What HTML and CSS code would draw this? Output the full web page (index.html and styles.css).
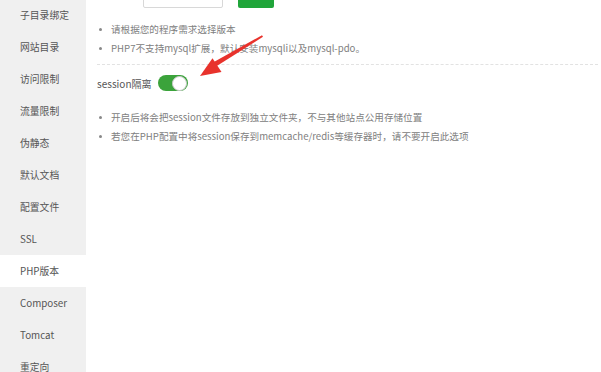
FILE: index.html
```html
<!DOCTYPE html>
<html>
<head>
<meta charset="utf-8">
<link rel="stylesheet" href="styles.css">
</head>
<body>
<div class="page">
  <ul class="side">
    <li>子目录绑定</li>
    <li>网站目录</li>
    <li>访问限制</li>
    <li>流量限制</li>
    <li>伪静态</li>
    <li>默认文档</li>
    <li>配置文件</li>
    <li>SSL</li>
    <li class="active">PHP版本</li>
    <li>Composer</li>
    <li>Tomcat</li>
    <li>重定向</li>
  </ul>
  <div class="main">
    <div class="toprow">
      <span class="label">PHP版本</span>
      <span class="select"></span>
      <span class="btn">切换</span>
    </div>
    <ul class="tips first">
      <li>请根据您的程序需求选择版本</li>
      <li>PHP7不支持mysql扩展，默认安装mysqli以及mysql-pdo。</li>
    </ul>
    <div class="sep"></div>
    <div class="session">
      <span class="sname">session隔离</span>
      <span class="toggle"><span class="knob"></span></span>
    </div>
    <ul class="tips second">
      <li>开启后将会把session文件存放到独立文件夹，不与其他站点公用存储位置</li>
      <li>若您在PHP配置中将session保存到memcache/redis等缓存器时，请不要开启此选项</li>
    </ul>
  </div>
  <svg class="arrow" width="601" height="372" viewBox="0 0 601 372">
    <polygon points="262,35.2 263,36.8 214.4,67.6 211.6,63.2" fill="#e8322c"/>
    <polygon points="200,76 212.5,58.2 221.5,72" fill="#e8322c"/>
  </svg>
</div>
</body>
</html>
```
FILE: styles.css
```css
html, body {
  margin: 0;
  padding: 0;
  background: #fff;
  overflow: hidden;
}
body {
  font-family: "Noto Sans CJK SC", "Noto Sans", sans-serif;
  font-size: 9.6px;
  color: #666;
}
.page {
  position: relative;
  display: flex;
  width: 601px;
  height: 372px;
  overflow: hidden;
}
.side {
  list-style: none;
  margin: -1px 0 0 0;
  padding: 0;
  width: 86px;
  flex: none;
  background: #f0f0f0;
  height: 400px;
}
.side li {
  height: 32px;
  line-height: 32px;
  padding-left: 20px;
  color: #555;
  font-size: 9.8px;
}
.side li.active {
  background: #fff;
}
.main {
  flex: 1;
  padding: 0 3px 0 11px;
}
.toprow {
  display: flex;
  align-items: flex-end;
  height: 30px;
  margin-top: -22px;
}
.label {
  width: 46px;
  color: #ddd;
  line-height: 30px;
  height: 30px;
}
.select {
  width: 78px;
  height: 29px;
  border: 1px solid #d8d8d8;
  border-radius: 2px;
  background: #fff;
}
.btn {
  margin-left: 15px;
  width: 36px;
  height: 29px;
  background: #20a53a;
  border-radius: 2px;
  color: #fff;
  text-align: center;
  line-height: 29px;
}
.tips {
  list-style: none;
  margin: 0;
  padding: 0;
}
.tips li {
  line-height: 19px;
  height: 19px;
  padding-left: 14px;
  position: relative;
  white-space: nowrap;
  color: #808080;
}
.tips li::before {
  content: "";
  position: absolute;
  left: 2px;
  top: 8px;
  width: 3px;
  height: 3px;
  border-radius: 50%;
  background: #888;
}
.tips.first {
  margin-top: 12px;
}
.sep {
  margin-top: 6px;
  border-top: 1px dashed #e2e2e2;
}
.session {
  display: flex;
  align-items: center;
  height: 20px;
  margin-top: 8px;
}
.sname {
  color: #555;
  font-size: 10px;
  width: 61px;
}
.toggle {
  position: relative;
  width: 30px;
  height: 16px;
  border-radius: 8px;
  background: #3ba33b;
}
.knob {
  position: absolute;
  right: 1px;
  top: 1px;
  width: 13px;
  height: 13px;
  border-radius: 50%;
  background: #fff;
  border: 0.5px solid #ccc;
}
.tips.second {
  margin-top: 15px;
}
.arrow {
  position: absolute;
  left: 0;
  top: 0;
  pointer-events: none;
}
```
